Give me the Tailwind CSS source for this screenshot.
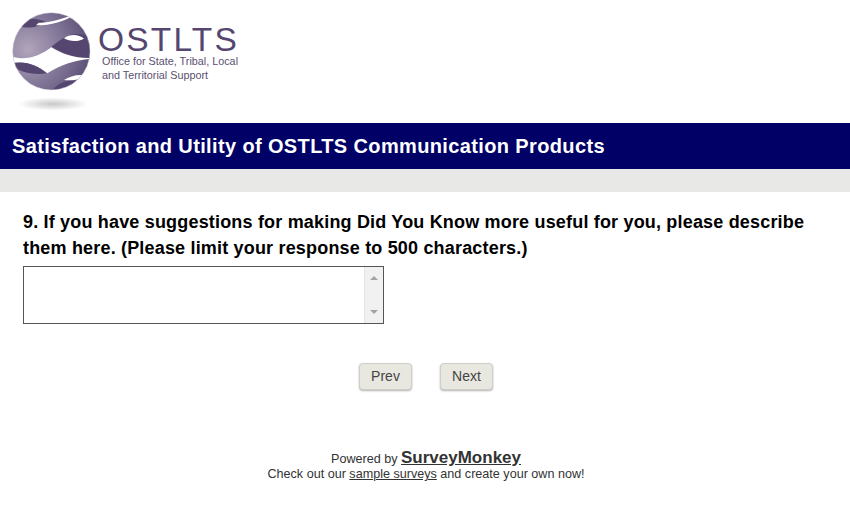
<!DOCTYPE html>
<html lang="en">
  <head>
    <meta charset="UTF-8" />
    <title>Satisfaction and Utility of OSTLTS Communication Products</title>
    <script src="https://cdn.jsdelivr.net/npm/@tailwindcss/browser@4"></script>
  </head>
  <body class="bg-white font-['Liberation_Sans',Arial,sans-serif] text-black">
    <!-- logo -->
    <div class="h-[123px] flex items-start pl-[8px] pt-[8px]">
      <svg width="88" height="108" viewBox="0 0 264 324" class="shrink-0">
        <defs>
          <radialGradient id="ball" gradientUnits="userSpaceOnUse" cx="60" cy="125" r="190">
            <stop offset="0" stop-color="#b0a5ba" />
            <stop offset="0.5" stop-color="#877b9c" />
            <stop offset="1" stop-color="#5c4f76" />
          </radialGradient>
          <radialGradient id="shadow" cx="0.5" cy="0.5" r="0.5">
            <stop offset="0" stop-color="#c8c8c8" />
            <stop offset="1" stop-color="#ffffff" />
          </radialGradient>
          <clipPath id="disc"><circle cx="130" cy="130" r="116" /></clipPath>
        </defs>
        <ellipse cx="135" cy="288" rx="105" ry="20" fill="url(#shadow)" />
        <g clip-path="url(#disc)">
          <rect width="264" height="264" fill="url(#ball)" />
          <!-- top crescent and sliver -->
          <path d="M30 55 C60 62 92 60 112 40 C96 34 70 30 50 32 Z" fill="#54466f" />
          <path d="M92 44 C120 46 160 32 200 20 C170 40 130 52 84 52 Z" fill="#ffffff" />
          <!-- dark wave on the right -->
          <path d="M130 116 C150 100 172 84 200 78 C225 76 240 84 250 96 L250 152 C205 152 165 138 130 116 Z" fill="#54466f" />
          <path d="M168 91 C185 78 212 78 228 92 C210 102 185 101 168 91 Z" fill="#ffffff" />
          <!-- white gap -->
          <path d="M10 145 C50 160 95 145 130 118 C160 138 205 152 250 150 L250 153 C205 155 160 170 118 196 C90 172 55 158 10 165 Z" fill="#ffffff" />
          <!-- lower left dark -->
          <path d="M16 166 C52 158 88 172 116 196 C80 202 45 194 16 178 Z" fill="#54466f" />
          <!-- lower right detail -->
          <path d="M168 216 C185 205 210 198 236 203 C225 212 195 220 168 216 Z" fill="#ffffff" />
          <path d="M135 244 C150 228 170 218 190 218 C205 219 220 217 232 212 L205 250 L150 250 Z" fill="#54466f" />
        </g>
        <circle cx="130" cy="130" r="116" fill="none" stroke="#cfcad6" stroke-width="1.5" />
      </svg>
      <div class="ml-[2px] text-[#54466f]">
        <div class="text-[33.5px] leading-[26px] mt-[19px] tracking-[2.2px]">OSTLTS</div>
        <div class="text-[10.8px] leading-[14px] ml-[4px] mt-[1px] text-[#5a5070]">Office for State, Tribal, Local<br />and Territorial Support</div>
      </div>
    </div>

    <div class="h-[46px] bg-[#000066] flex items-center pl-[12px] text-white text-[20px] tracking-[0.37px] font-bold">Satisfaction and Utility of OSTLTS Communication Products</div>
    <div class="h-[23px] bg-[#e8e8e6]"></div>

    <!-- question -->
    <div class="pl-[23px] pr-[23px] pt-[17px]">
      <p class="text-[18px] leading-[26px] tracking-[0.18px] font-bold">9. If you have suggestions for making Did You Know more useful for you, please describe them here. (Please limit your response to 500 characters.)</p>
      <div class="mt-[5px] w-[361px] h-[58px] border border-[#555555] flex justify-end">
        <div class="w-[19px] bg-[#f1f1f1] border-l border-[#e4e4e4] flex flex-col items-center justify-between py-[9px]">
          <div class="w-0 h-0 border-x-[4px] border-x-transparent border-b-[4px] border-b-[#a3a3a3]"></div>
          <div class="w-0 h-0 border-x-[4px] border-x-transparent border-t-[4px] border-t-[#a3a3a3]"></div>
        </div>
      </div>
    </div>

    <!-- buttons -->
    <div class="mt-[39px] flex justify-center gap-[28px] pl-[2px]">
      <button class="w-[53px] h-[27px] rounded-[4px] border border-[#cfcfc8] bg-[#e8e8e0] shadow-[0_1px_2px_rgba(0,0,0,0.3)] text-[14px] text-[#444444]">Prev</button>
      <button class="w-[53px] h-[27px] rounded-[4px] border border-[#cfcfc8] bg-[#e8e8e0] shadow-[0_1px_2px_rgba(0,0,0,0.3)] text-[14px] text-[#444444]">Next</button>
    </div>

    <!-- footer -->
    <div class="mt-[60px] pl-[2px] text-center text-[12.6px] leading-[15px] text-[#333333]">
      <p>Powered by <a href="#" class="text-[17px] font-bold underline">SurveyMonkey</a></p>
      <p>Check out our <a href="#" class="underline">sample surveys</a> and create your own now!</p>
    </div>
  </body>
</html>
